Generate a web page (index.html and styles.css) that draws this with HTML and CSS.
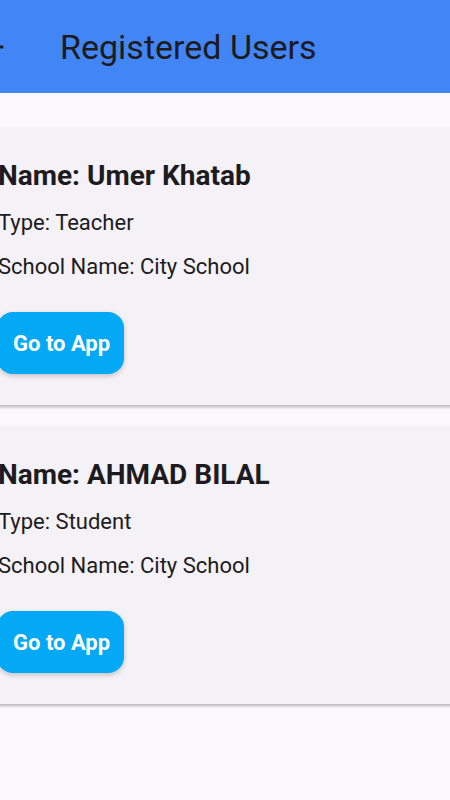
FILE: index.html
```html
<!DOCTYPE html>
<html lang="en">
<head>
  <meta charset="UTF-8" />
  <meta name="viewport" content="width=device-width, initial-scale=1" />
  <title>Registered Users</title>
  <link rel="stylesheet" href="styles.css">
</head>
<body>
  <header class="app-bar">
    <svg class="back" viewBox="0 0 24 24" aria-hidden="true">
      <path d="M20 11H7.83l5.59-5.59L12 4l-8 8 8 8 1.41-1.41L7.83 13H20v-2z" />
    </svg>
    <h1>Registered Users</h1>
  </header>

  <main class="list">
    <div class="card">
      <h2>Name: Umer Khatab</h2>
      <p>Type: Teacher</p>
      <p>School Name: City School</p>
      <button class="go">Go to App</button>
    </div>
    <div class="card">
      <h2>Name: AHMAD BILAL</h2>
      <p>Type: Student</p>
      <p>School Name: City School</p>
      <button class="go">Go to App</button>
    </div>
  </main>
</body>
</html>
```

FILE: styles.css
```css
body {
  margin: 0;
  font-family: Roboto, "Noto Sans", sans-serif;
  background-color: #fdf8fd;
  color: #1d1b20;
  overflow: hidden;
}
.app-bar {
  height: 93px;
  background-color: #4285f4;
  display: flex;
  align-items: center;
}
.back {
  width: 34px;
  height: 34px;
  margin-left: -25px;
  fill: #1d1b20;
  flex-shrink: 0;
}
.app-bar h1 {
  margin: 0 0 0 51px;
  font-size: 34px;
  font-weight: 400;
  line-height: 40px;
  white-space: nowrap;
}
.list {
  margin: 34px 0 0 -22px;
  width: 520px;
}
.card {
  background-color: #f4f1f7;
  padding: 33px 20px 31px;
  margin-bottom: 21px;
  box-shadow: 0 2px 3px rgba(0,0,0,0.28);
}
.card h2 {
  margin: 0;
  font-size: 28px;
  font-weight: 700;
  line-height: 32px;
}
.card p {
  margin: 18px 0 0;
  font-size: 22px;
  line-height: 26px;
}
.go {
  margin: 32px 0 0 -1px;
  height: 62px;
  padding: 0 14px 0 16px;
  border: none;
  border-radius: 16px;
  background-color: #03a9f4;
  color: #fff;
  font-family: inherit;
  font-size: 22px;
  font-weight: 700;
  box-shadow: 0 2px 5px rgba(0,0,0,0.2);
}
```
